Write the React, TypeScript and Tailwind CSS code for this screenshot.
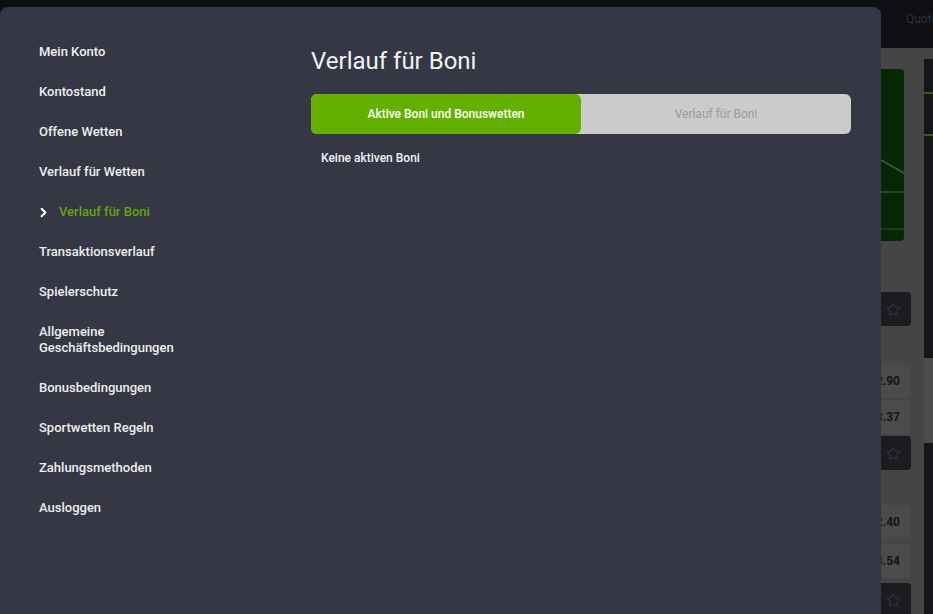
import { ChevronRight, Star } from 'lucide-react';

const menuItems = [
  'Mein Konto',
  'Kontostand',
  'Offene Wetten',
  'Verlauf für Wetten',
  'Verlauf für Boni',
  'Transaktionsverlauf',
  'Spielerschutz',
  'Allgemeine Geschäftsbedingungen',
  'Bonusbedingungen',
  'Sportwetten Regeln',
  'Zahlungsmethoden',
  'Ausloggen',
];

const StarCard = () => (
  <div className="h-[34px] shrink-0 rounded-[4px] bg-[#1b1c20] flex items-center justify-end pr-[10px]">
    <Star size={15} strokeWidth={1.5} className="text-[#3c3d43]" />
  </div>
);

const OddBox = ({ value }: { value: string }) => (
  <div className="h-[34px] shrink-0 rounded-[4px] bg-[#4b4b4b] flex items-center justify-end pr-[11px] text-[12px] font-bold text-[#141414]">
    {value}
  </div>
);

const Background = () => (
  <div className="flex flex-col h-full">
    {/* top bar */}
    <div className="h-[48px] shrink-0 bg-[#0e0f12] flex items-start pt-[12px] pl-[893px]">
      <div className="w-px h-[14px] bg-[#4a4b50]" />
      <span className="ml-[13px] -mt-px text-[12px] leading-[16px] text-[#2c2f35] whitespace-nowrap">Quoten</span>
    </div>
    <div className="flex-1 flex bg-[#454545] overflow-hidden">
      <div className="w-[924px] flex flex-col items-end pr-[13px]">
        {/* match field card */}
        <div className="mt-[21px] mr-[7px] w-[60px] h-[172px] shrink-0 rounded-[4px] bg-[#052803] overflow-hidden">
          <svg width="60" height="172" viewBox="0 0 60 172">
            <line x1="0" y1="70" x2="60" y2="104" stroke="#4a5a48" strokeWidth="1.5" />
            <line x1="0" y1="123" x2="60" y2="123" stroke="#3d4d3b" strokeWidth="1.5" />
            <line x1="0" y1="160" x2="60" y2="160" stroke="#3d4d3b" strokeWidth="1" />
          </svg>
        </div>
        <div className="mt-[51px] w-[60px] flex flex-col">
          <StarCard />
          <div className="mt-[38px] flex flex-col gap-[2px]">
            <OddBox value="2.90" />
            <OddBox value="3.37" />
            <StarCard />
          </div>
          <div className="mt-[35px] flex flex-col gap-[5px]">
            <OddBox value="2.40" />
            <OddBox value="3.54" />
            <StarCard />
          </div>
        </div>
      </div>
      <div className="flex-1 flex flex-col">
        <div className="mt-[11px] h-[299px] shrink-0 bg-[#15161a] flex flex-col">
          <div className="mt-[33px] h-[2px] bg-[#3c5a0a]" />
          <div className="mt-[40px] h-[2px] bg-[#3c5a0a]" />
        </div>
        <div className="h-[85px] shrink-0 bg-[#4c4c4c]" />
        <div className="flex-1 bg-[#15161a]" />
      </div>
    </div>
  </div>
);

export default function App() {
  const active = 'Verlauf für Boni';

  return (
    <div
      className="relative w-[933px] h-[614px] overflow-hidden bg-[#0e0f12]"
      style={{ fontFamily: 'Roboto, "Liberation Sans", sans-serif' }}
    >
      <Background />

      {/* account modal */}
      <div className="absolute left-0 top-[7px] w-[881px] h-[607px] rounded-t-[8px] bg-[#353744] flex">
        <nav className="w-[271px] pl-[39px] pt-[25px] flex flex-col">
          {menuItems.map((item) =>
            item === active ? (
              <div key={item} className="py-[12px] flex items-center text-[13px] leading-[16px] font-medium text-[#62a70b]">
                <ChevronRight size={15} strokeWidth={3.2} className="text-white -ml-[3px]" />
                <span className="ml-[8px]">{item}</span>
              </div>
            ) : (
              <div key={item} className="py-[12px] pr-[70px] text-[13px] leading-[16px] font-medium text-[#eeeef0]">
                {item}
              </div>
            )
          )}
        </nav>

        <main className="flex-1 pt-[37px] pr-[30px] pl-[40px]">
          <h1 className="text-[24px] leading-[34px] text-[#f2f2f4]">Verlauf für Boni</h1>
          <div className="mt-[16px] flex h-[40px] rounded-[6px] bg-[#cbcbcb] overflow-hidden">
            <button className="flex-1 rounded-[6px] bg-[#63b000] text-white text-[12px] font-medium">
              Aktive Boni und Bonuswetten
            </button>
            <button className="flex-1 text-[#9a9a9a] text-[12px]">Verlauf für Boni</button>
          </div>
          <p className="mt-[15px] pl-[10px] text-[12px] font-medium text-[#f2f2f4]">Keine aktiven Boni</p>
        </main>
      </div>
    </div>
  );
}
